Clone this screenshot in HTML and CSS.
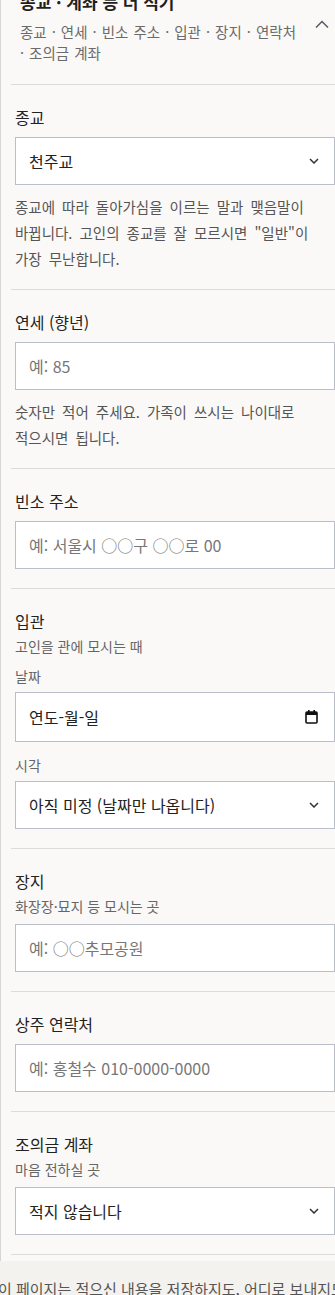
FILE: index.html
```html
<!DOCTYPE html>
<html lang="ko">
<head>
    <meta charset="UTF-8">
    <meta name="viewport" content="width=device-width, initial-scale=1.0">
    <title>종교 · 계좌 등 더 적기</title>
    <link rel="stylesheet" href="styles.css">
</head>
<body>

<div class="page">
    <!-- More details panel -->
    <details class="more" open>
        <summary class="more-head">
            <div class="more-titles">
                <div class="more-title">종교 · 계좌 등 더 적기</div>
                <div class="more-sub">종교 ·&nbsp;연세 ·&nbsp;빈소 주소 ·&nbsp;입관 ·&nbsp;장지 ·&nbsp;연락처 ·&nbsp;조의금 계좌</div>
            </div>
            <svg class="more-chevron" width="14" height="8" viewBox="0 0 14 8">
                <path d="M1 7.5 L7 1.5 L13 7.5" fill="none" stroke="#555b66" stroke-width="1.5"/>
            </svg>
        </summary>

        <div class="section">
            <label class="label" for="religion">종교</label>
            <div class="select-wrap">
                <select id="religion" class="select">
                    <option>천주교</option>
                    <option>일반</option>
                    <option>기독교</option>
                    <option>불교</option>
                </select>
                <svg class="select-arrow" width="10" height="6" viewBox="0 0 10 6">
                    <path d="M1 1 L5 5 L9 1" fill="none" stroke="#333" stroke-width="1.5"/>
                </svg>
            </div>
            <p class="help">종교에 따라 돌아가심을 이르는 말과 맺음말이 바뀝니다. 고인의 종교를 잘 모르시면 "일반"이 가장 무난합니다.</p>
        </div>

        <div class="section">
            <label class="label" for="age">연세 (향년)</label>
            <input id="age" class="input" type="text" placeholder="예: 85">
            <p class="help">숫자만 적어 주세요. 가족이 쓰시는 나이대로 적으시면 됩니다.</p>
        </div>

        <div class="section">
            <label class="label" for="address">빈소 주소</label>
            <input id="address" class="input" type="text" placeholder="예: 서울시 ○○구 ○○로 00">
        </div>

        <div class="section">
            <div class="label with-sub">입관</div>
            <div class="sub">고인을 관에 모시는 때</div>
            <div class="small-label">날짜</div>
            <div class="input date-input">
                <span>연도-월-일</span>
                <svg width="13" height="14" viewBox="0 0 13 14">
                    <rect x="1" y="2" width="11" height="11" rx="1" fill="none" stroke="#111" stroke-width="1.6"/>
                    <rect x="1" y="2" width="11" height="3" fill="#111"/>
                    <rect x="3" y="0" width="1.6" height="3" fill="#111"/>
                    <rect x="8.4" y="0" width="1.6" height="3" fill="#111"/>
                </svg>
            </div>
            <div class="small-label">시각</div>
            <div class="select-wrap">
                <select class="select">
                    <option>아직 미정 (날짜만 나옵니다)</option>
                </select>
                <svg class="select-arrow" width="10" height="6" viewBox="0 0 10 6">
                    <path d="M1 1 L5 5 L9 1" fill="none" stroke="#333" stroke-width="1.5"/>
                </svg>
            </div>
        </div>

        <div class="section">
            <label class="label with-sub" for="burial">장지</label>
            <div class="sub">화장장·묘지 등 모시는 곳</div>
            <input id="burial" class="input" type="text" placeholder="예: ○○추모공원">
        </div>

        <div class="section">
            <label class="label" for="contact">상주 연락처</label>
            <input id="contact" class="input" type="text" placeholder="예: 홍철수 010-0000-0000">
        </div>

        <div class="section">
            <label class="label with-sub" for="account">조의금 계좌</label>
            <div class="sub">마음 전하실 곳</div>
            <div class="select-wrap">
                <select id="account" class="select">
                    <option>적지 않습니다</option>
                </select>
                <svg class="select-arrow" width="10" height="6" viewBox="0 0 10 6">
                    <path d="M1 1 L5 5 L9 1" fill="none" stroke="#333" stroke-width="1.5"/>
                </svg>
            </div>
        </div>
    </details>

    <p class="note">이 페이지는 적으신 내용을 저장하지도, 어디로 보내지도 않습니다.</p>
</div>

</body>
</html>
```

FILE: styles.css
```css
body {
    margin: 0;
    overflow: hidden;
    background-color: #f4f2ee;
    font-family: "Noto Sans CJK KR", "Noto Sans", sans-serif;
    color: #222;
    word-break: keep-all;
}
.page { margin-top: -10px; }

.more {
    padding: 0 0 6px 10px;
    background-color: #faf9f7;
    border-left: 1px solid #d6d6d6;
}
.more-head {
    list-style: none;
    display: flex;
    justify-content: space-between;
    align-items: flex-start;
    padding: 0 6px 21px 9px;
    border-bottom: 1px solid #dedcd8;
    cursor: pointer;
}
.more-head::-webkit-details-marker { display: none; }
.more-titles { width: 290px; }
.more-title {
    font-size: 17px;
    line-height: 24px;
    font-weight: 600;
    color: #1f1f1f;
}
.more-sub {
    margin-top: 7px;
    font-size: 14.5px;
    line-height: 21px;
    word-spacing: 1px;
    color: #6b6b6b;
}
.more-chevron { margin-top: 30px; }

.section {
    padding: 20px 0 19px 4px;
    border-bottom: 1px solid #dedcd8;
}
.label {
    display: block;
    font-size: 16px;
    line-height: 24px;
    color: #222;
    margin-bottom: 8px;
}
.label.with-sub { margin-bottom: 3px; }
.sub {
    font-size: 14px;
    line-height: 20px;
    color: #666;
    margin-bottom: 8px;
}
.small-label {
    font-size: 14px;
    line-height: 20px;
    color: #666;
    margin: 10px 0 6px;
}
.small-label + .input { height: 50px; }
.input + .small-label { margin-top: 13px; }

.input,
.select {
    display: block;
    box-sizing: border-box;
    width: 100%;
    height: 48px;
    margin: 0;
    padding: 0 13px;
    font-family: inherit;
    font-size: 16px;
    color: #222;
    background-color: #fff;
    border: 1px solid #b9bec8;
    border-radius: 0;
    outline: none;
}
.input::placeholder { color: #777; }
.select {
    -webkit-appearance: none;
    appearance: none;
    cursor: pointer;
}
.select-wrap { position: relative; }
.select-arrow {
    position: absolute;
    right: 16px;
    top: 21px;
    pointer-events: none;
}
.date-input {
    display: flex;
    align-items: center;
    justify-content: space-between;
    padding-right: 16px;
}

.help {
    margin: 9px 0 -2px;
    font-size: 14.5px;
    line-height: 26px;
    word-spacing: 3px;
    color: #555;
}

.note {
    margin: 16px 0 0 -2px;
    white-space: nowrap;
    font-size: 15px;
    line-height: 24px;
    color: #555;
}
```
